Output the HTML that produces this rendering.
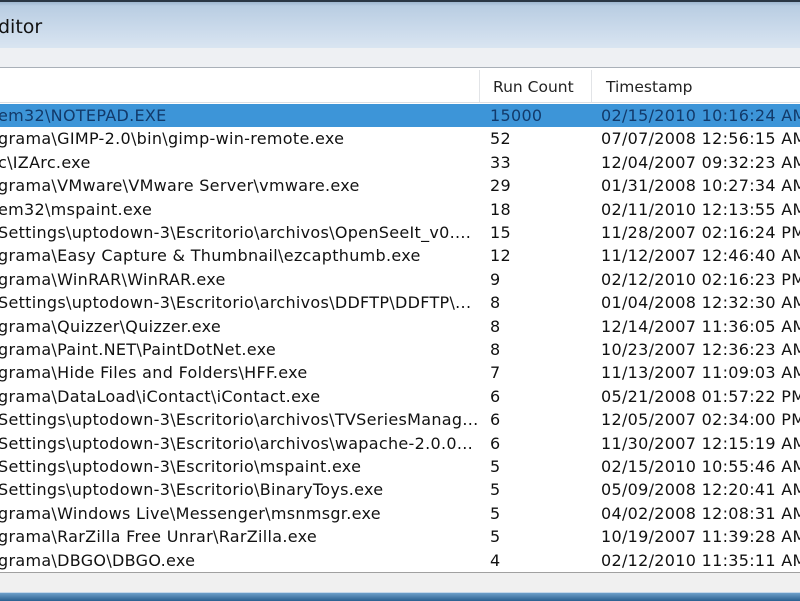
<!DOCTYPE html>
<html><head><style>
body{margin:0;width:800px;height:600px;overflow:hidden;background:#f0f0f0;font-family:"DejaVu Sans",sans-serif;position:relative}
.title{position:absolute;left:0;top:0;width:800px;height:48px;background:linear-gradient(#9fb6cf 0px,#b9cde2 4px,#c9d9ea 25px,#dbe6f2 48px);border-top:2px solid #2a3644;box-sizing:border-box}
.title span{position:absolute;left:-2px;top:14px;font-size:19px;color:#111}
.band{position:absolute;top:48px;left:0;width:800px;height:19px;background:#eef0f3;border-bottom:1px solid #a9b0b8}
.list{position:absolute;top:68px;left:0;width:800px;height:504px;background:#fff;border-bottom:1px solid #a0a0a0}
.hdr{position:absolute;top:0;left:0;width:800px;height:34px;border-bottom:1px solid #dcdfe3;background:#fff}
.hdr div{position:absolute;top:10px;font-size:15.5px;color:#222}
.sep{position:absolute;top:2px;width:1px;height:32px;background:#e2e4e7}
.row{position:absolute;left:0;width:800px;height:23px;font-size:16px;color:#111;white-space:nowrap;letter-spacing:0.3px}
.row span{position:absolute;top:2px}
.c1{left:-2px}.c2{left:490px}.c3{left:601px}
.sel{background:#3d95d8;color:#123a6a}
.bot{position:absolute;top:592px;left:0;width:800px;height:8px;background:linear-gradient(#6d9fc9,#2a5f8f);border-top:1px solid #c5d7e8}
</style></head><body>
<div class="title"><span>ditor</span></div>
<div class="band"></div>
<div class="list">
<div class="hdr"><div style="left:493px">Run Count</div><div style="left:606px">Timestamp</div><span class="sep" style="left:479px"></span><span class="sep" style="left:591px"></span></div>
<div class="row sel" style="top:36px"><span class="c1">em32\NOTEPAD.EXE</span><span class="c2">15000</span><span class="c3">02/15/2010 10:16:24 AM</span></div>
<div class="row" style="top:59.4px"><span class="c1">grama\GIMP-2.0\bin\gimp-win-remote.exe</span><span class="c2">52</span><span class="c3">07/07/2008 12:56:15 AM</span></div>
<div class="row" style="top:82.8px"><span class="c1">c\IZArc.exe</span><span class="c2">33</span><span class="c3">12/04/2007 09:32:23 AM</span></div>
<div class="row" style="top:106.2px"><span class="c1">grama\VMware\VMware Server\vmware.exe</span><span class="c2">29</span><span class="c3">01/31/2008 10:27:34 AM</span></div>
<div class="row" style="top:129.6px"><span class="c1">em32\mspaint.exe</span><span class="c2">18</span><span class="c3">02/11/2010 12:13:55 AM</span></div>
<div class="row" style="top:153px"><span class="c1">Settings\uptodown-3\Escritorio\archivos\OpenSeeIt_v0....</span><span class="c2">15</span><span class="c3">11/28/2007 02:16:24 PM</span></div>
<div class="row" style="top:176.4px"><span class="c1">grama\Easy Capture &amp; Thumbnail\ezcapthumb.exe</span><span class="c2">12</span><span class="c3">11/12/2007 12:46:40 AM</span></div>
<div class="row" style="top:199.8px"><span class="c1">grama\WinRAR\WinRAR.exe</span><span class="c2">9</span><span class="c3">02/12/2010 02:16:23 PM</span></div>
<div class="row" style="top:223.2px"><span class="c1">Settings\uptodown-3\Escritorio\archivos\DDFTP\DDFTP\...</span><span class="c2">8</span><span class="c3">01/04/2008 12:32:30 AM</span></div>
<div class="row" style="top:246.6px"><span class="c1">grama\Quizzer\Quizzer.exe</span><span class="c2">8</span><span class="c3">12/14/2007 11:36:05 AM</span></div>
<div class="row" style="top:270px"><span class="c1">grama\Paint.NET\PaintDotNet.exe</span><span class="c2">8</span><span class="c3">10/23/2007 12:36:23 AM</span></div>
<div class="row" style="top:293.4px"><span class="c1">grama\Hide Files and Folders\HFF.exe</span><span class="c2">7</span><span class="c3">11/13/2007 11:09:03 AM</span></div>
<div class="row" style="top:316.8px"><span class="c1">grama\DataLoad\iContact\iContact.exe</span><span class="c2">6</span><span class="c3">05/21/2008 01:57:22 PM</span></div>
<div class="row" style="top:340.2px"><span class="c1">Settings\uptodown-3\Escritorio\archivos\TVSeriesManag...</span><span class="c2">6</span><span class="c3">12/05/2007 02:34:00 PM</span></div>
<div class="row" style="top:363.6px"><span class="c1">Settings\uptodown-3\Escritorio\archivos\wapache-2.0.0...</span><span class="c2">6</span><span class="c3">11/30/2007 12:15:19 AM</span></div>
<div class="row" style="top:387px"><span class="c1">Settings\uptodown-3\Escritorio\mspaint.exe</span><span class="c2">5</span><span class="c3">02/15/2010 10:55:46 AM</span></div>
<div class="row" style="top:410.4px"><span class="c1">Settings\uptodown-3\Escritorio\BinaryToys.exe</span><span class="c2">5</span><span class="c3">05/09/2008 12:20:41 AM</span></div>
<div class="row" style="top:433.8px"><span class="c1">grama\Windows Live\Messenger\msnmsgr.exe</span><span class="c2">5</span><span class="c3">04/02/2008 12:08:31 AM</span></div>
<div class="row" style="top:457.2px"><span class="c1">grama\RarZilla Free Unrar\RarZilla.exe</span><span class="c2">5</span><span class="c3">10/19/2007 11:39:28 AM</span></div>
<div class="row" style="top:480.6px"><span class="c1">grama\DBGO\DBGO.exe</span><span class="c2">4</span><span class="c3">02/12/2010 11:35:11 AM</span></div>
</div>
<div class="bot"></div>
</body></html>
